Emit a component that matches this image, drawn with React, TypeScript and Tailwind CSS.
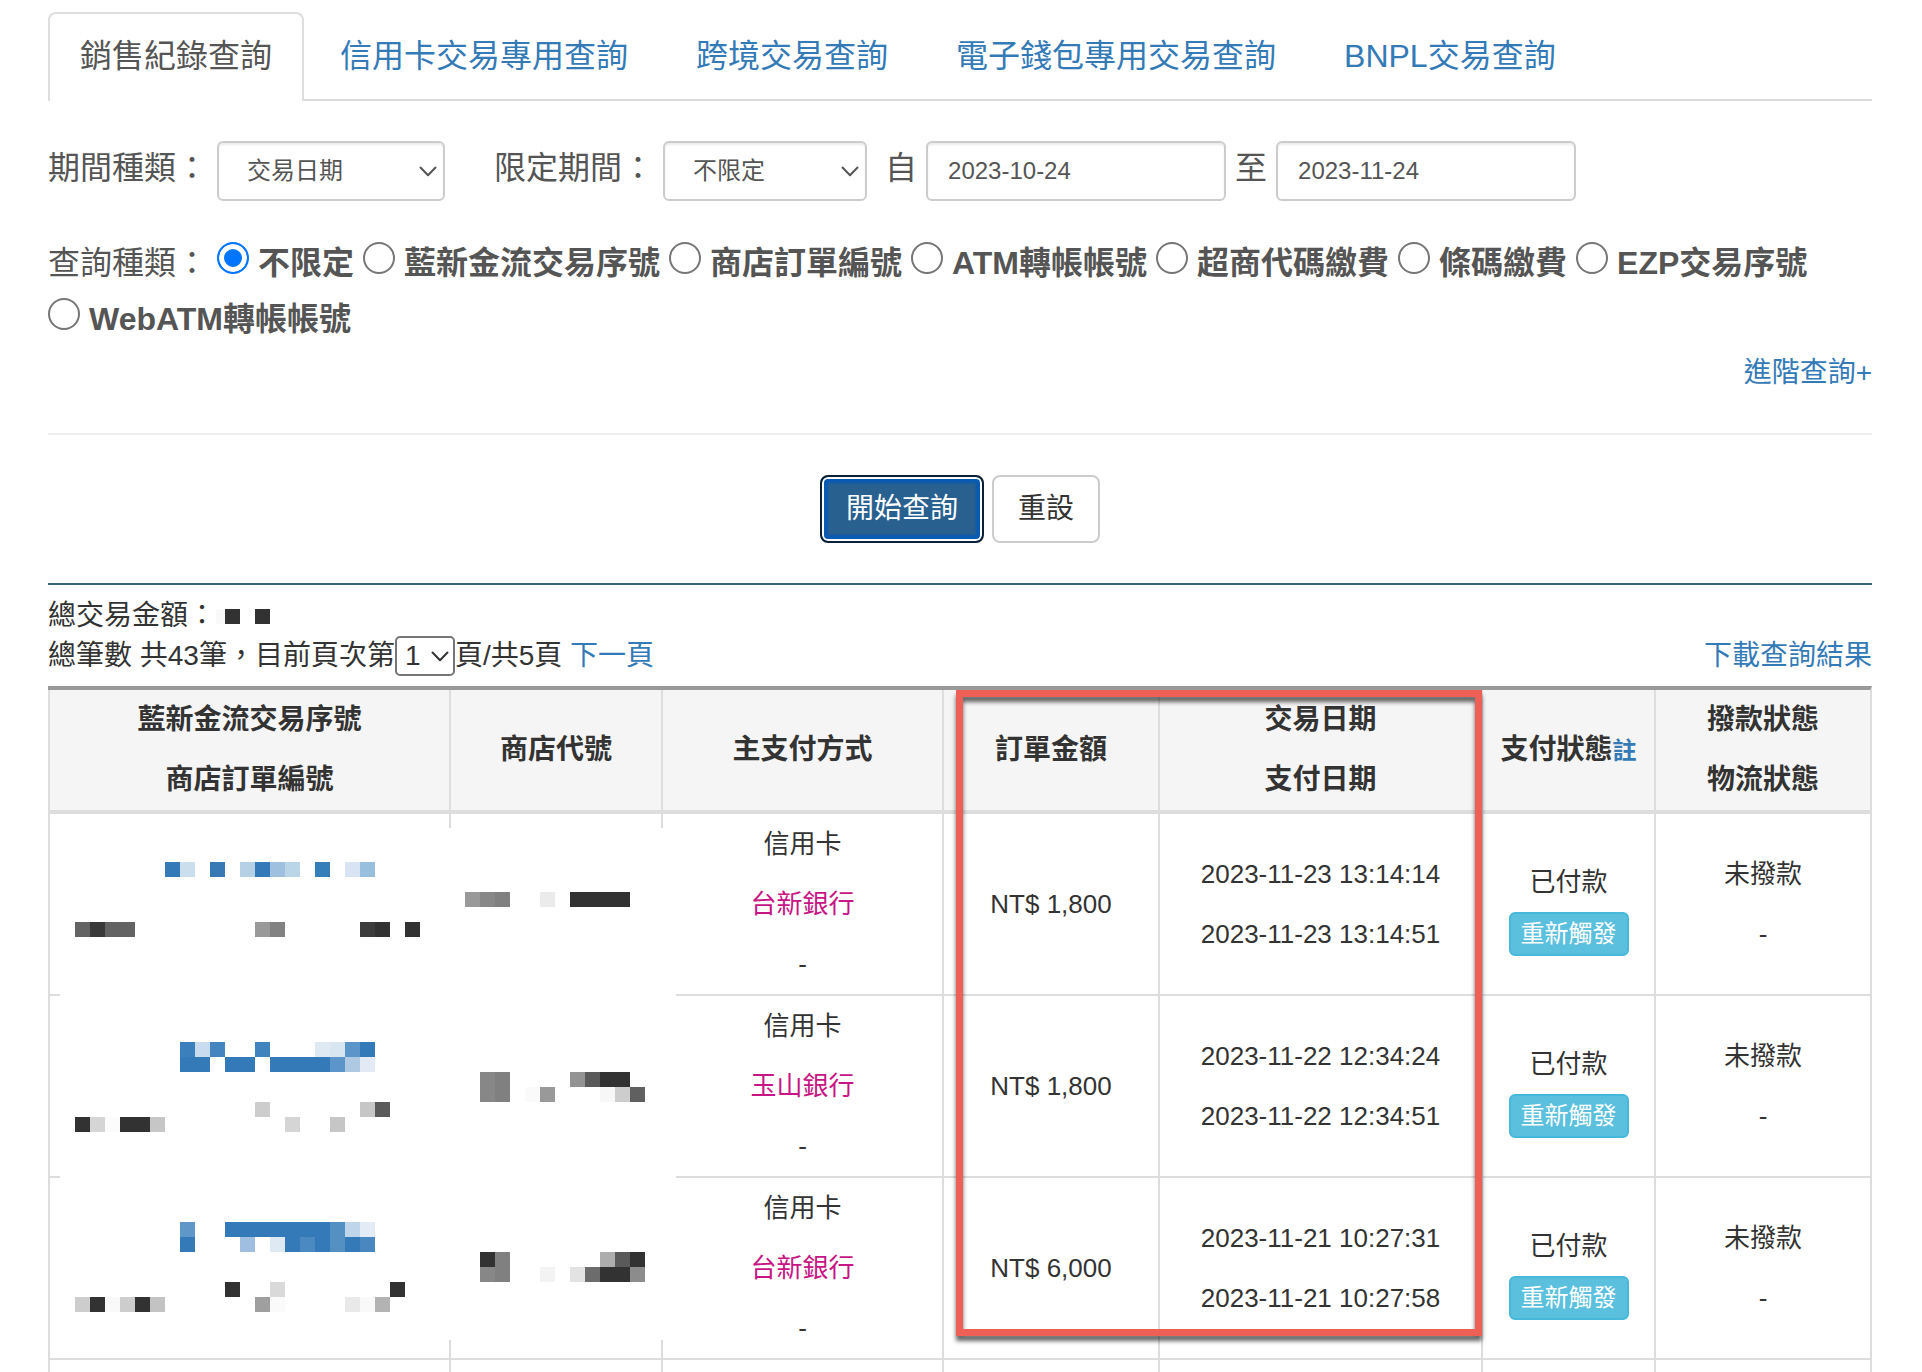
import React from "react";

const TABS = ["銷售紀錄查詢", "信用卡交易專用查詢", "跨境交易查詢", "電子錢包專用交易查詢", "BNPL交易查詢"];

const QUERY_KINDS = [
  "不限定",
  "藍新金流交易序號",
  "商店訂單編號",
  "ATM轉帳帳號",
  "超商代碼繳費",
  "條碼繳費",
  "EZP交易序號",
  "WebATM轉帳帳號",
];

const ROWS = [
  { bank: "台新銀行", amount: "NT$ 1,800", traded: "2023-11-23 13:14:14", paid: "2023-11-23 13:14:51" },
  { bank: "玉山銀行", amount: "NT$ 1,800", traded: "2023-11-22 12:34:24", paid: "2023-11-22 12:34:51" },
  { bank: "台新銀行", amount: "NT$ 6,000", traded: "2023-11-21 10:27:31", paid: "2023-11-21 10:27:58" },
];

const B = "#347ab8";
const K = "#323232";

// Pixelated redaction: [row, first column, colours of consecutive cells]
const MOSAIC: [number, number, string[]][] = [
  [0, 7, [B, "#cadeee"]],
  [0, 10, ["#3879b5"]],
  [0, 12, ["#b6d0e5", B, "#9fc1df", "#b9d5e7"]],
  [0, 17, ["#347fb9"]],
  [0, 19, ["#d8e4f3", "#98bfdd"]],
  [2, 27, ["#999999", "#878787", "#808080"]],
  [2, 32, ["#ebebeb"]],
  [2, 34, [K, K, K, K]],
  [4, 1, ["#636363", "#393939", "#636363", "#636363"]],
  [4, 13, ["#999999", "#828282"]],
  [4, 20, ["#3c3c3c", K]],
  [4, 23, [K]],
  [12, 8, ["#3b80bc", "#c8dbef", "#4585bf"]],
  [12, 13, ["#4084bd"]],
  [12, 17, ["#dee9f3", "#d8e6f2", "#5c95c9", B]],
  [13, 8, [B, B]],
  [13, 11, [B, B]],
  [13, 14, [B, B, B, B, "#5c95c9", "#b0c9e3", "#e3e9f5"]],
  [14, 28, ["#878787", "#808080"]],
  [14, 34, ["#939393", "#5a5a5a", K, K]],
  [15, 28, ["#878787", "#808080"]],
  [15, 31, ["#fafafa", "#999999"]],
  [15, 36, ["#f7f7f7", "#cdcdcd", "#606060"]],
  [16, 13, ["#cdcdcd"]],
  [16, 20, ["#c6c6c6", "#5a5a5a"]],
  [17, 1, [K, "#d5d5d5", "#fcfcfc", K, K, "#c6c6c6"]],
  [17, 15, ["#d5d5d5"]],
  [17, 18, ["#c6c6c6"]],
  [24, 8, ["#5f98c8"]],
  [24, 11, [B, B, B, B, B, B, B, "#5590c3", "#bfd5ea", "#e3ecf6"]],
  [25, 8, [B]],
  [25, 12, ["#a0bfe0"]],
  [25, 14, ["#dee9f3", B, "#4a89c2", B, "#5590c3", B, "#4a86c0"]],
  [26, 28, [K, "#808080"]],
  [26, 36, ["#adadad", "#5a5a5a", K]],
  [27, 28, ["#878787", "#808080"]],
  [27, 32, ["#f3f3f3"]],
  [27, 34, ["#e3e3e3", "#6c6c6c", K, K, "#8c8c8c"]],
  [28, 11, [K]],
  [28, 14, ["#d9d9d9"]],
  [28, 22, [K]],
  [29, 1, ["#cdcdcd", K, "#f9f9f9", "#cdcdcd", K, "#c3c3c3"]],
  [29, 13, ["#9f9f9f", "#fafafa"]],
  [29, 19, ["#e9e9e9", "#f9f9f9", "#b3b3b3"]],
];

function Chevron({ className }: { className: string }) {
  return (
    <svg
      viewBox="0 0 18 11"
      fill="none"
      stroke="currentColor"
      strokeWidth="2"
      aria-hidden="true"
      className={"pointer-events-none absolute h-[11px] w-[18px] " + className}
    >
      <path d="M1.5 1.5 9 9.3l7.500-7.800" strokeLinecap="round" strokeLinejoin="round" />
    </svg>
  );
}

function SelectBox({ id, value, className }: { id: string; value: string; className: string }) {
  return (
    <div className={"relative " + className}>
      <select
        id={id}
        className="h-[60px] w-full appearance-none rounded-[6px] border-2 border-[#cccccc] bg-white pl-7 text-[24px] text-[#555555] shadow-[inset_0_2px_2px_rgba(0,0,0,0.075)]"
      >
        <option>{value}</option>
      </select>
      <Chevron className="right-2 top-[25px]" />
    </div>
  );
}

const inputClass =
  "h-[60px] w-[300px] rounded-[6px] border-2 border-[#cccccc] bg-white px-5 text-[24px] text-[#555555] shadow-[inset_0_2px_2px_rgba(0,0,0,0.075)]";
const th = "h-[124px] border-b-4 border-l-2 border-[#dddddd] bg-[#f5f5f5] p-0 text-[28px] font-bold leading-[60px]";
const td = "border-b-2 border-l-2 border-[#dddddd] p-0";

function Mosaic() {
  return (
    <svg
      viewBox="0 0 616 512"
      shapeRendering="crispEdges"
      aria-hidden="true"
      className="absolute left-3 top-[142px] h-[512px] w-[616px] bg-white"
    >
      {MOSAIC.map(([row, col, colours]) =>
        colours.map((c, i) => (
          <rect key={row + "-" + (col + i)} x={(col + i) * 15} y={34 + row * 15} width="15" height="15" fill={c} />
        )),
      )}
    </svg>
  );
}

export default function App() {
  return (
    <main className="bg-white pl-12 pr-[50px] pt-3 font-['Liberation_Sans','Noto_Sans_CJK_TC',sans-serif] text-[#333333]">
      <nav className="flex gap-1 border-b-2 border-[#dddddd] text-[32px]">
        {TABS.map((t, i) => (
          <a
            key={t}
            href="#"
            className={
              i === 0
                ? "-mb-0.5 rounded-t-[8px] border-2 border-b-0 border-[#dddddd] bg-white px-[30px] pb-0.5 leading-[85px] text-[#555555]"
                : "border-2 border-b-0 border-transparent px-[30px] leading-[85px] text-[#337ab7]"
            }
          >
            {t}
          </a>
        ))}
      </nav>

      <form onSubmit={(e) => e.preventDefault()}>
        <div className="mt-10 flex items-start gap-[9px] text-[32px] leading-[54px] text-[#555555]">
          <label htmlFor="period-kind">期間種類：</label>
          <SelectBox id="period-kind" value="交易日期" className="w-[228px]" />
          <label htmlFor="period-limit" className="ml-10">
            限定期間：
          </label>
          <SelectBox id="period-limit" value="不限定" className="w-[204px]" />
          <label htmlFor="date-from" className="ml-[9px]">
            自
          </label>
          <input id="date-from" type="text" defaultValue="2023-10-24" className={inputClass} />
          <label htmlFor="date-to">至</label>
          <input id="date-to" type="text" defaultValue="2023-11-24" className={inputClass} />
        </div>

        <div
          role="radiogroup"
          aria-label="查詢種類"
          className="mt-[34px] flex flex-wrap gap-x-[9px] text-[32px] leading-[56px] text-[#555555]"
        >
          <span>查詢種類：</span>
          {QUERY_KINDS.map((k, i) => (
            <label key={k} className="flex items-start gap-[9px] font-bold">
              <input
                type="radio"
                name="query-kind"
                defaultChecked={i === 0}
                className="mt-[7px] size-8 appearance-none rounded-full border-2 border-[#767676] bg-white checked:border-[#0075ff] checked:bg-[#0075ff] checked:shadow-[inset_0_0_0_5px_white]"
              />
              {k}
            </label>
          ))}
        </div>

        <div className="mt-1.5 flex justify-end text-[28px] leading-10">
          <a href="#" className="text-[#337ab7]">
            進階查詢+
          </a>
        </div>

        <hr className="mt-10 border-t-2 border-[#eeeeee]" />

        <div className="mt-10 flex justify-center gap-2 text-[28px]">
          <button
            type="submit"
            className="h-[68px] w-[164px] rounded-[8px] border-2 border-[#0b2036] bg-[#286090] text-white shadow-[inset_0_0_0_2px_white,inset_0_0_2px_6px_#0a5ab4]"
          >
            開始查詢
          </button>
          <button type="reset" className="h-[68px] w-[108px] rounded-[8px] border-2 border-[#cccccc] bg-white">
            重設
          </button>
        </div>
      </form>

      <section className="mt-10 border-t-2 border-[#3a647c] pt-[11px] text-[28px] leading-10">
        <div className="flex items-center">
          總交易金額：
          <svg viewBox="0 0 75 15" shapeRendering="crispEdges" aria-hidden="true" className="h-[15px] w-[75px]">
            <rect width="9" height="15" fill="#f9f9f9" />
            <rect x="9" width="15" height="15" fill={K} />
            <rect x="39" width="15" height="15" fill={K} />
          </svg>
        </div>
        <div className="flex justify-between">
          <div className="flex">
            <span>總筆數 共43筆，目前頁次第</span>
            <div className="relative">
              <select
                aria-label="頁次"
                className="block h-10 w-[60px] appearance-none rounded-[5px] border-2 border-[#767676] bg-white pl-2 text-[28px] leading-[36px]"
              >
                <option>1</option>
              </select>
              <Chevron className="right-1.5 top-[15px]" />
            </div>
            <span className="whitespace-pre">頁/共5頁 </span>
            <a href="#" className="text-[#337ab7]">
              下一頁
            </a>
          </div>
          <a href="#" className="text-[#337ab7]">
            下載查詢結果
          </a>
        </div>
      </section>

      <div className="relative mt-2.5">
        <table className="w-full table-fixed border-separate border-spacing-0 border-r-2 border-t-4 border-r-[#dddddd] border-t-[#999999] text-center">
          <colgroup>
            <col className="w-[401px]" />
            <col className="w-[212px]" />
            <col className="w-[281px]" />
            <col className="w-[216px]" />
            <col className="w-[323px]" />
            <col className="w-[173px]" />
            <col className="w-[216px]" />
          </colgroup>
          <thead>
            <tr>
              <th className={th}>
                藍新金流交易序號
                <br />
                商店訂單編號
              </th>
              <th className={th}>商店代號</th>
              <th className={th}>主支付方式</th>
              <th className={th}>訂單金額</th>
              <th className={th}>
                交易日期
                <br />
                支付日期
              </th>
              <th className={th}>
                支付狀態
                <a href="#" className="text-[24px] text-[#337ab7]">
                  註
                </a>
              </th>
              <th className={th}>
                撥款狀態
                <br />
                物流狀態
              </th>
            </tr>
          </thead>
          <tbody className="text-[26px] leading-[60px]">
            {ROWS.map((r) => (
              <tr key={r.traded}>
                <td className={td} />
                <td className={td} />
                <td className={td}>
                  <div>信用卡</div>
                  <div>
                    <a href="#" className="text-[#c71585]">
                      {r.bank}
                    </a>
                  </div>
                  <div>-</div>
                </td>
                <td className={td}>{r.amount}</td>
                <td className={td}>
                  <div>{r.traded}</div>
                  <div>{r.paid}</div>
                </td>
                <td className={td}>
                  <div className="flex flex-col items-center">
                    <div>已付款</div>
                    <button
                      type="button"
                      className="h-11 rounded-[6px] border-2 border-[#46b8da] bg-[#5bc0de] px-2.5 text-[24px] leading-10 text-white"
                    >
                      重新觸發
                    </button>
                  </div>
                </td>
                <td className={td}>
                  <div>未撥款</div>
                  <div>-</div>
                </td>
              </tr>
            ))}
            <tr>
              {[0, 1, 2, 3, 4, 5, 6].map((c) => (
                <td key={c} className="h-3 border-l-2 border-[#dddddd] p-0" />
              ))}
            </tr>
          </tbody>
        </table>
        <Mosaic />
        <div className="pointer-events-none absolute left-[908px] top-1 h-[646px] w-[526px] border-[7px] border-[#ee6055] drop-shadow-[0_5px_2px_rgba(0,0,0,0.6)]" />
      </div>
    </main>
  );
}
